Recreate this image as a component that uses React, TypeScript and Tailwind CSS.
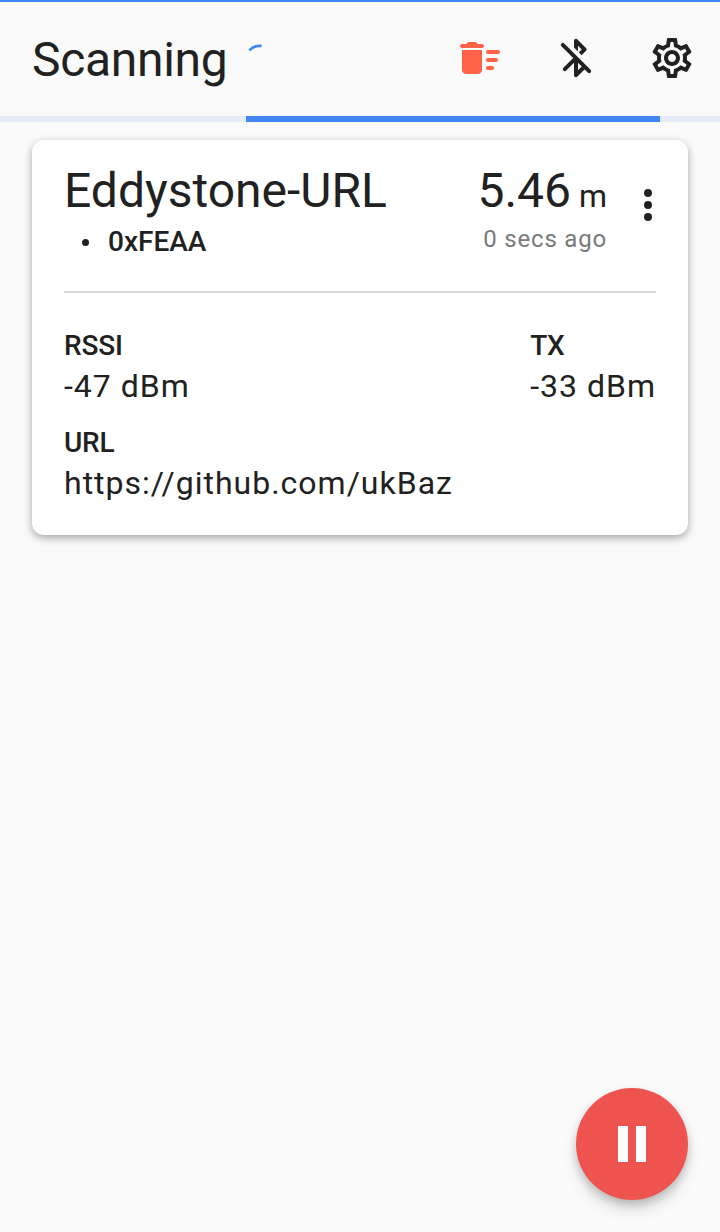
import React from 'react';
import { MdOutlineSettings } from 'react-icons/md';

type IconProps = { className?: string };

type Beacon = {
  name: string;
  uuid: string;
  distance: string;
  lastSeen: string;
  rssi: string;
  tx: string;
  url: string;
};

const beacon: Beacon = {
  name: 'Eddystone-URL',
  uuid: '0xFEAA',
  distance: '5.46',
  lastSeen: '0 secs ago',
  rssi: '-47 dBm',
  tx: '-33 dBm',
  url: 'https://github.com/ukBaz',
};

const DeleteSweepIcon: React.FC<IconProps> = ({ className }) => (
  <svg viewBox="0 0 24 24" fill="currentColor" className={className}>
    <path d="M16 16h2c.55 0 1 .45 1 1s-.45 1-1 1h-2c-.55 0-1-.45-1-1s.45-1 1-1zm0-8h5c.55 0 1 .45 1 1s-.45 1-1 1h-5c-.55 0-1-.45-1-1s.45-1 1-1zm0 4h4c.55 0 1 .45 1 1s-.45 1-1 1h-4c-.55 0-1-.45-1-1s.45-1 1-1zM3 18c0 1.1.9 2 2 2h6c1.1 0 2-.9 2-2V8H3v10zM13 5h-2l-.71-.71c-.18-.18-.44-.29-.7-.29H6.41c-.26 0-.52.11-.7.29L5 5H3c-.55 0-1 .45-1 1s.45 1 1 1h10c.55 0 1-.45 1-1s-.45-1-1-1z" />
  </svg>
);

const BluetoothDisabledIcon: React.FC<IconProps> = ({ className }) => (
  <svg viewBox="0 0 24 24" fill="currentColor" className={className}>
    <path d="M19.29 17.89L6.11 4.7c-.39-.39-1.02-.39-1.41 0s-.39 1.02 0 1.41L10.59 12 5.7 16.89c-.39.39-.39 1.02 0 1.41.39.39 1.02.39 1.41 0L11 14.41v6.18c0 .89 1.08 1.34 1.71.71l3.59-3.59 1.59 1.59c.39.39 1.02.39 1.41 0 .38-.39.38-1.03-.01-1.41zM13 18.17v-3.76l1.88 1.88L13 18.17zm0-12.34l1.88 1.88-1.47 1.47 1.41 1.41L17 8.42c.39-.39.39-1.02 0-1.42l-4.29-4.29c-.63-.63-1.71-.19-1.71.7v3.36l2 2V5.83z" />
  </svg>
);

const Spinner: React.FC<IconProps> = ({ className }) => (
  <svg viewBox="0 0 32 32" fill="none" stroke="currentColor" strokeWidth="2.8" className={className}>
    <path d="M3.4 6.4Q8 1.2 15.6 1.9" />
  </svg>
);

const Field: React.FC<{ label: string; value: string }> = ({ label, value }) => (
  <div>
    <h3 className="text-[28px] leading-10 font-medium tracking-[-0.2px]">{label}</h3>
    <p className="text-[32px] leading-[41px] tracking-[1px]">{value}</p>
  </div>
);

const Toolbar = () => (
  <header className="flex h-[114px] items-center border-t-2 border-[#4285f4] pr-6 pl-8">
    <h1 className="pt-[3px] text-[48px] leading-[56px] tracking-[-0.3px]">Scanning</h1>
    <Spinner className="mt-1 ml-[19px] h-8 w-8 text-[#4285f4]" />
    <div className="ml-auto flex gap-12">
      <button aria-label="Clear">
        <DeleteSweepIcon className="size-12 text-[#ff6347]" />
      </button>
      <button aria-label="Bluetooth">
        <BluetoothDisabledIcon className="size-12" />
      </button>
      <button aria-label="Settings">
        <MdOutlineSettings className="size-12" />
      </button>
    </div>
  </header>
);

const BeaconCard: React.FC<{ data: Beacon }> = ({ data }) => (
  <article className="mx-8 mt-[18px] h-[395px] rounded-xl bg-white px-8 pt-[23px] shadow-[0_3px_9px_rgba(0,0,0,0.34)]">
    <div className="flex h-[128px]">
      <div className="flex-1">
        <h2 className="text-[48px] leading-[56px]">{data.name}</h2>
        <div className="flex items-center text-[28px] leading-[46px] font-medium">
          <span className="mr-[19px] ml-[18px] size-[7px] rounded-full bg-current" />
          {data.uuid}
        </div>
      </div>
      <div className="text-right">
        <p className="text-[48px] leading-[56px]">
          {data.distance} <span className="-ml-1 text-[32px]">m</span>
        </p>
        <p className="text-[24px] leading-[30px] tracking-[0.8px] text-[#7a7a7a]">{data.lastSeen}</p>
      </div>
      <button aria-label="More" className="mr-1 ml-[37px] flex h-[84px] flex-col items-center justify-center gap-1">
        <span className="size-2 rounded-full bg-current" />
        <span className="size-2 rounded-full bg-current" />
        <span className="size-2 rounded-full bg-current" />
      </button>
    </div>
    <hr className="border-t-2 border-[#d8d8d8]" />
    <div className="flex justify-between pt-[33px]">
      <Field label="RSSI" value={data.rssi} />
      <Field label="TX" value={data.tx} />
    </div>
    <div className="pt-4">
      <Field label="URL" value={data.url} />
    </div>
  </article>
);

export default function App() {
  return (
    <div className="flex h-[1232px] w-[720px] flex-col bg-[#fafafa] font-['Roboto',sans-serif] text-[#212121]">
      <Toolbar />
      <div className="mt-[2px] flex h-[6px] bg-[#e6ebf9]">
        <div className="ml-[246px] w-[414px] bg-[#4285f4]" />
      </div>
      <BeaconCard data={beacon} />
      <button
        aria-label="Pause"
        className="mt-auto mr-8 mb-8 flex size-28 items-center justify-center gap-2 self-end rounded-full bg-[#ef5350] shadow-[0_6px_10px_-1px_rgba(0,0,0,0.16),0_10px_16px_rgba(0,0,0,0.1),0_2px_10px_rgba(0,0,0,0.06)]"
      >
        <span className="h-9 w-[10px] bg-white" />
        <span className="h-9 w-[10px] bg-white" />
      </button>
    </div>
  );
}
